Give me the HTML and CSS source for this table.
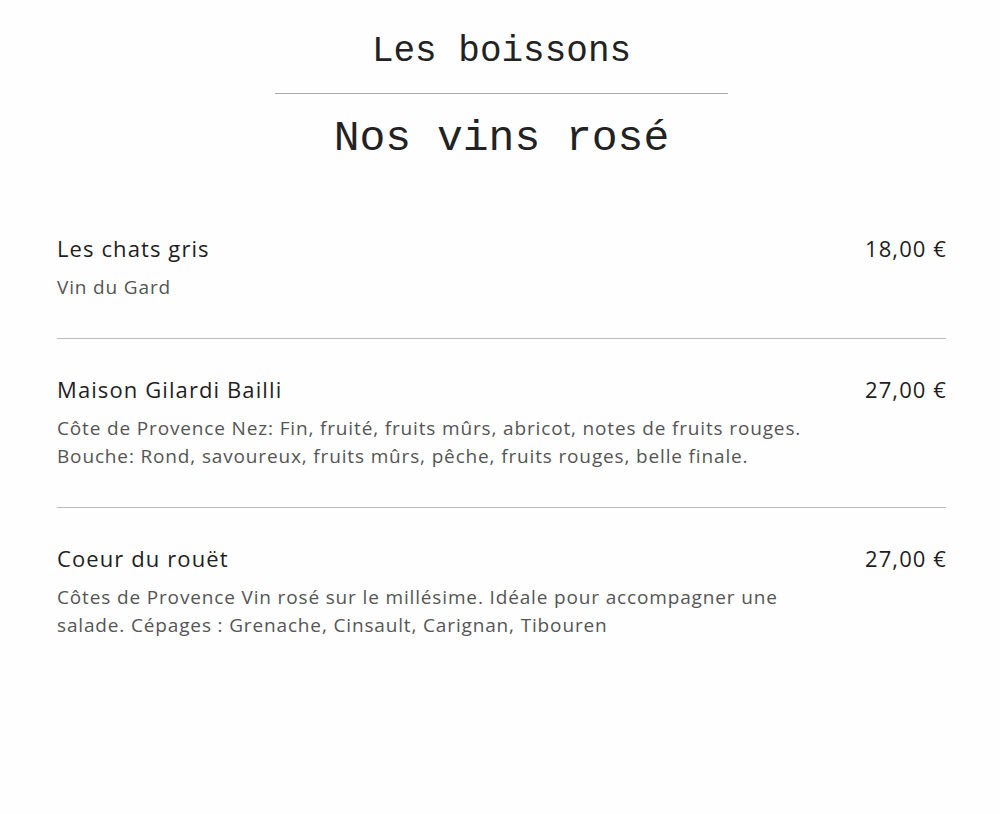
FILE: index.html
```html
<!DOCTYPE html>
<html lang="fr">
<head>
    <meta charset="UTF-8">
    <meta name="viewport" content="width=device-width, initial-scale=1.0">
    <title>Les boissons - Nos vins rosé</title>
    <link rel="stylesheet" href="styles.css">
</head>
<body>
    <div class="menu">
        <h2 class="menu-cat">Les boissons</h2>
        <hr class="cat-line">
        <h1 class="menu-title">Nos vins rosé</h1>

        <ul class="wine-list">
            <li class="wine">
                <div class="wine-head">
                    <span class="wine-name">Les chats gris</span>
                    <span class="wine-price">18,00 €</span>
                </div>
                <p class="wine-desc">Vin du Gard</p>
            </li>
            <li class="wine">
                <div class="wine-head">
                    <span class="wine-name">Maison Gilardi Bailli</span>
                    <span class="wine-price">27,00 €</span>
                </div>
                <p class="wine-desc">Côte de Provence Nez: Fin, fruité, fruits mûrs, abricot, notes de fruits rouges. Bouche: Rond, savoureux, fruits mûrs, pêche, fruits rouges, belle finale.</p>
            </li>
            <li class="wine">
                <div class="wine-head">
                    <span class="wine-name">Coeur du rouët</span>
                    <span class="wine-price">27,00 €</span>
                </div>
                <p class="wine-desc">Côtes de Provence Vin rosé sur le millésime. Idéale pour accompagner une salade. Cépages : Grenache, Cinsault, Carignan, Tibouren</p>
            </li>
        </ul>
    </div>
</body>
</html>
```

FILE: styles.css
```css
body {
    margin: 0;
    padding: 0;
    background-color: #fefefe;
    font-family: "Open Sans", "Lato", sans-serif;
    color: #222;
}
.menu {
    padding: 32px 54px 40px 57px;
}
.menu-cat {
    margin: 0;
    font-family: "Liberation Mono", "Courier New", monospace;
    font-weight: normal;
    font-size: 36px;
    line-height: 40px;
    text-align: center;
    color: #222;
}
.cat-line {
    width: 453px;
    margin: 21px auto 20px;
    border: none;
    border-top: 1px solid #aaa;
}
.menu-title {
    margin: 0;
    font-family: "Liberation Mono", "Courier New", monospace;
    font-weight: normal;
    font-size: 43px;
    line-height: 50px;
    text-align: center;
    color: #222;
}
.wine-list {
    list-style: none;
    margin: 69px 0 0;
    padding: 0;
}
.wine {
    padding: 0 0 37px;
    margin-bottom: 35px;
    border-bottom: 1px solid #bbb;
}
.wine:last-child {
    border-bottom: none;
}
.wine-head {
    display: flex;
    justify-content: space-between;
    align-items: baseline;
    font-size: 22px;
    line-height: 30px;
    letter-spacing: 1.1px;
    color: #1e1e1e;
}
.wine-price {
    margin-right: -1px;
}
.wine-desc {
    margin: 10px 0 0;
    max-width: 780px;
    font-size: 19px;
    line-height: 28px;
    letter-spacing: 0.85px;
    color: #555;
}
```
